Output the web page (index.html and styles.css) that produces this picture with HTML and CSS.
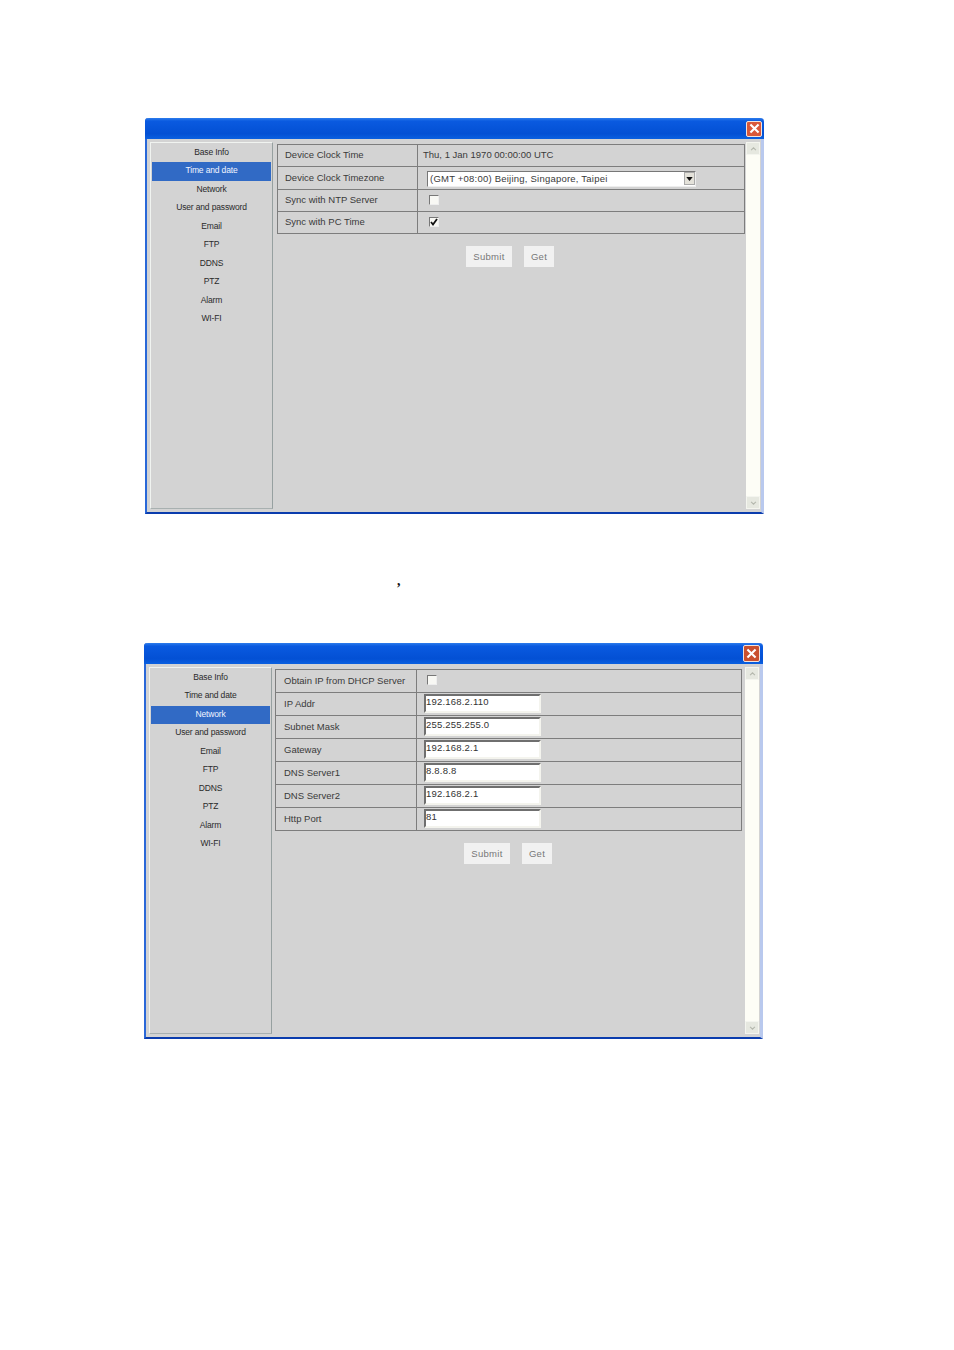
FILE: index.html
```html
<!DOCTYPE html>
<html lang="en">
<head>
<meta charset="utf-8">
<title>Device settings</title>
<link rel="stylesheet" href="styles.css">
</head>
<body>
<section class="window first">
  <header class="titlebar">
    <span class="close"><svg viewBox="0 0 16 16" width="13" height="13"><path d="M3 3L13 13M13 3L3 13" stroke="#fff" stroke-width="2.6" fill="none"/></svg></span>
  </header>
  <div class="client">
    <nav class="sidebar">
      <div class="item">Base Info</div>
      <div class="item active">Time and date</div>
      <div class="item">Network</div>
      <div class="item">User and password</div>
      <div class="item">Email</div>
      <div class="item">FTP</div>
      <div class="item">DDNS</div>
      <div class="item">PTZ</div>
      <div class="item">Alarm</div>
      <div class="item">WI-FI</div>
    </nav>
    <main class="content">
      <div class="table t1">
        <div class="row r22"><div class="label">Device Clock Time</div><div class="value pad">Thu, 1 Jan 1970 00:00:00 UTC</div></div>
        <div class="row r23"><div class="label">Device Clock Timezone</div><div class="value"><div class="select"><span>(GMT +08:00) Beijing, Singapore, Taipei</span><span class="arrow"><svg viewBox="0 0 8 5" width="7" height="4"><path d="M0 0H8L4 5Z" fill="#111"/></svg></span></div></div></div>
        <div class="row r22"><div class="label">Sync with NTP Server</div><div class="value"><span class="check"></span></div></div>
        <div class="row r22"><div class="label">Sync with PC Time</div><div class="value"><span class="check"><svg viewBox="0 0 10 10" width="10" height="10"><path d="M2 5L4 7.5L8 2" stroke="#111" stroke-width="1.8" fill="none"/></svg></span></div></div>
      </div>
      <div class="buttons b1"><span class="btn submit">Submit</span><span class="btn get">Get</span></div>
    </main>
    <aside class="scroll"><span class="sb"><svg viewBox="0 0 8 5" width="7" height="4"><path d="M1 4L4 1L7 4" stroke="#b5b8ae" stroke-width="1.4" fill="none"/></svg></span><span class="sb"><svg viewBox="0 0 8 5" width="7" height="4"><path d="M1 1L4 4L7 1" stroke="#b5b8ae" stroke-width="1.4" fill="none"/></svg></span></aside>
  </div>
</section>

<p class="comma">,</p>

<section class="window second">
  <header class="titlebar">
    <span class="close"><svg viewBox="0 0 16 16" width="13" height="13"><path d="M3 3L13 13M13 3L3 13" stroke="#fff" stroke-width="2.6" fill="none"/></svg></span>
  </header>
  <div class="client">
    <nav class="sidebar">
      <div class="item">Base Info</div>
      <div class="item">Time and date</div>
      <div class="item active">Network</div>
      <div class="item">User and password</div>
      <div class="item">Email</div>
      <div class="item">FTP</div>
      <div class="item">DDNS</div>
      <div class="item">PTZ</div>
      <div class="item">Alarm</div>
      <div class="item">WI-FI</div>
    </nav>
    <main class="content">
      <div class="table t2">
        <div class="row r23"><div class="label">Obtain IP from DHCP Server</div><div class="value"><span class="check"></span></div></div>
        <div class="row r23"><div class="label">IP Addr</div><div class="value"><span class="input">192.168.2.110</span></div></div>
        <div class="row r23"><div class="label">Subnet Mask</div><div class="value"><span class="input">255.255.255.0</span></div></div>
        <div class="row r23"><div class="label">Gateway</div><div class="value"><span class="input">192.168.2.1</span></div></div>
        <div class="row r23"><div class="label">DNS Server1</div><div class="value"><span class="input">8.8.8.8</span></div></div>
        <div class="row r23"><div class="label">DNS Server2</div><div class="value"><span class="input">192.168.2.1</span></div></div>
        <div class="row r23"><div class="label">Http Port</div><div class="value"><span class="input">81</span></div></div>
      </div>
      <div class="buttons b2"><span class="btn submit">Submit</span><span class="btn get">Get</span></div>
    </main>
    <aside class="scroll"><span class="sb"><svg viewBox="0 0 8 5" width="7" height="4"><path d="M1 4L4 1L7 4" stroke="#b5b8ae" stroke-width="1.4" fill="none"/></svg></span><span class="sb"><svg viewBox="0 0 8 5" width="7" height="4"><path d="M1 1L4 4L7 1" stroke="#b5b8ae" stroke-width="1.4" fill="none"/></svg></span></aside>
  </div>
</section>
</body>
</html>
```

FILE: styles.css
```css
* { box-sizing: border-box; }
html, body { margin: 0; padding: 0; background: #fff; }
body {
  width: 954px;
  height: 1350px;
  overflow: hidden;
  padding-top: 118px;
  font-family: "Liberation Sans", Arial, sans-serif;
  font-size: 9.5px;
  color: #333;
}
.window {
  width: 619px;
  height: 396px;
  display: flex;
  flex-direction: column;
  background: #d3d3d3;
  border-left: 2px solid #2a68d8;
  border-right: 3px solid #b9c9ee;
  border-bottom: 2px solid #0a3cad;
  border-radius: 3px 3px 0 0;
}
.first { margin-left: 145px; }
.second { margin-left: 144px; }
.titlebar {
  height: 21px;
  margin: 0 -3px 0 -2px;
  flex: none;
  display: flex;
  justify-content: flex-end;
  align-items: center;
  padding-right: 2px;
  background: linear-gradient(#2c7cec 0, #0a5ae0 15%, #0350d4 75%, #0a60e0 100%);
  border-radius: 4px 4px 0 0;
}
.close {
  width: 16px;
  height: 16px;
  display: flex;
  align-items: center;
  justify-content: center;
  background: #d9583a;
  border: 1px solid #f2e3dc;
  border-radius: 2px;
}
.second .titlebar { padding-right: 3px; }
.second .close { width: 17px; height: 17px; background: #c9502f; }
.client { flex: 1; display: flex; min-height: 0; }
.sidebar {
  width: 123px;
  height: 367px;
  margin: 3px 0 0 3px;
  flex: none;
  padding: 1px 1px 0;
  border: 1px solid;
  border-color: #f0f3f0 #96a0a0 #a8b0b0 #f0f3f0;
}
.item {
  height: 18.45px;
  line-height: 17px;
  text-align: center;
  font-size: 8.5px;
  letter-spacing: -.15px;
  color: #2a2a2a;
}
.item.active { background: #316ac5; color: #f0f4ff; }
.content { flex: 1; min-width: 0; padding-left: 4px; }
.t1 { margin-top: 5px; width: 468px; }
.t2 { margin-top: 5px; margin-left: -1px; width: 467px; }
.table { border: 1px solid #7d7d7d; border-bottom: 0; }
.row { display: flex; border-bottom: 1px solid #7d7d7d; }
.r22 { height: 22px; }
.r23 { height: 23px; }
.label {
  width: 140px;
  flex: none;
  padding: 0 0 2px 7px;
  display: flex;
  align-items: center;
  border-right: 1px solid #7d7d7d;
  color: #3a3a3a;
  white-space: nowrap;
}
.t2 .label { width: 141px; padding-left: 8px; padding-bottom: 1px; }
.value { flex: 1; display: flex; align-items: center; padding-left: 8px; color: #3a3a3a; white-space: nowrap; }
.value.pad { padding-left: 5px; padding-bottom: 2px; }
.select {
  width: 269px;
  height: 16px;
  margin: 1px 0 0 1px;
  background: #fff;
  border: 1px solid;
  border-color: #777 #eee #eee #777;
  display: flex;
  align-items: center;
  justify-content: space-between;
  padding-left: 2px;
  letter-spacing: .22px;
}
.arrow {
  width: 11px;
  height: 13px;
  display: flex;
  align-items: center;
  justify-content: center;
  background: #e4e2da;
  border: 1px solid #aaa;
}
.check {
  width: 10px;
  height: 10px;
  margin: 0 0 2px 3px;
  display: block;
  background: #f8f8f4;
  border: 1px solid;
  border-color: #777 #eee #eee #777;
}
.check svg { display: block; margin: -1px; }
.t2 .value { padding-left: 7px; }
.input {
  width: 117px;
  height: 19px;
  margin-bottom: 1px;
  display: block;
  background: #fff;
  border: 2px solid;
  border-color: #6f6f6f #f4f4ee #f4f4ee #6f6f6f;
  line-height: 11px;
  letter-spacing: .2px;
  color: #333;
}
.buttons { display: flex; gap: 12px; }
.b1 { margin: 12px 0 0 189px; }
.b2 { margin: 12px 0 0 188px; }
.btn {
  height: 21px;
  display: flex;
  align-items: center;
  justify-content: center;
  background: #f1f1f1;
  color: #777;
  letter-spacing: .3px;
}
.submit { width: 46px; }
.get { width: 30px; }
.scroll {
  width: 14px;
  margin: 3px 1px 0 0;
  height: 367px;
  flex: none;
  display: flex;
  flex-direction: column;
  justify-content: space-between;
  background: #fdfdf6;
}
.sb {
  height: 13px;
  display: flex;
  align-items: center;
  justify-content: center;
  background: #e6e8e0;
  border: 1px solid #f4f5ef;
}
.comma {
  margin: 0;
  height: 129px;
  padding: 57px 0 0 397px;
  font-family: "Liberation Serif", serif;
  font-size: 14px;
  line-height: 20px;
  font-weight: 700;
  color: #111;
}
```
